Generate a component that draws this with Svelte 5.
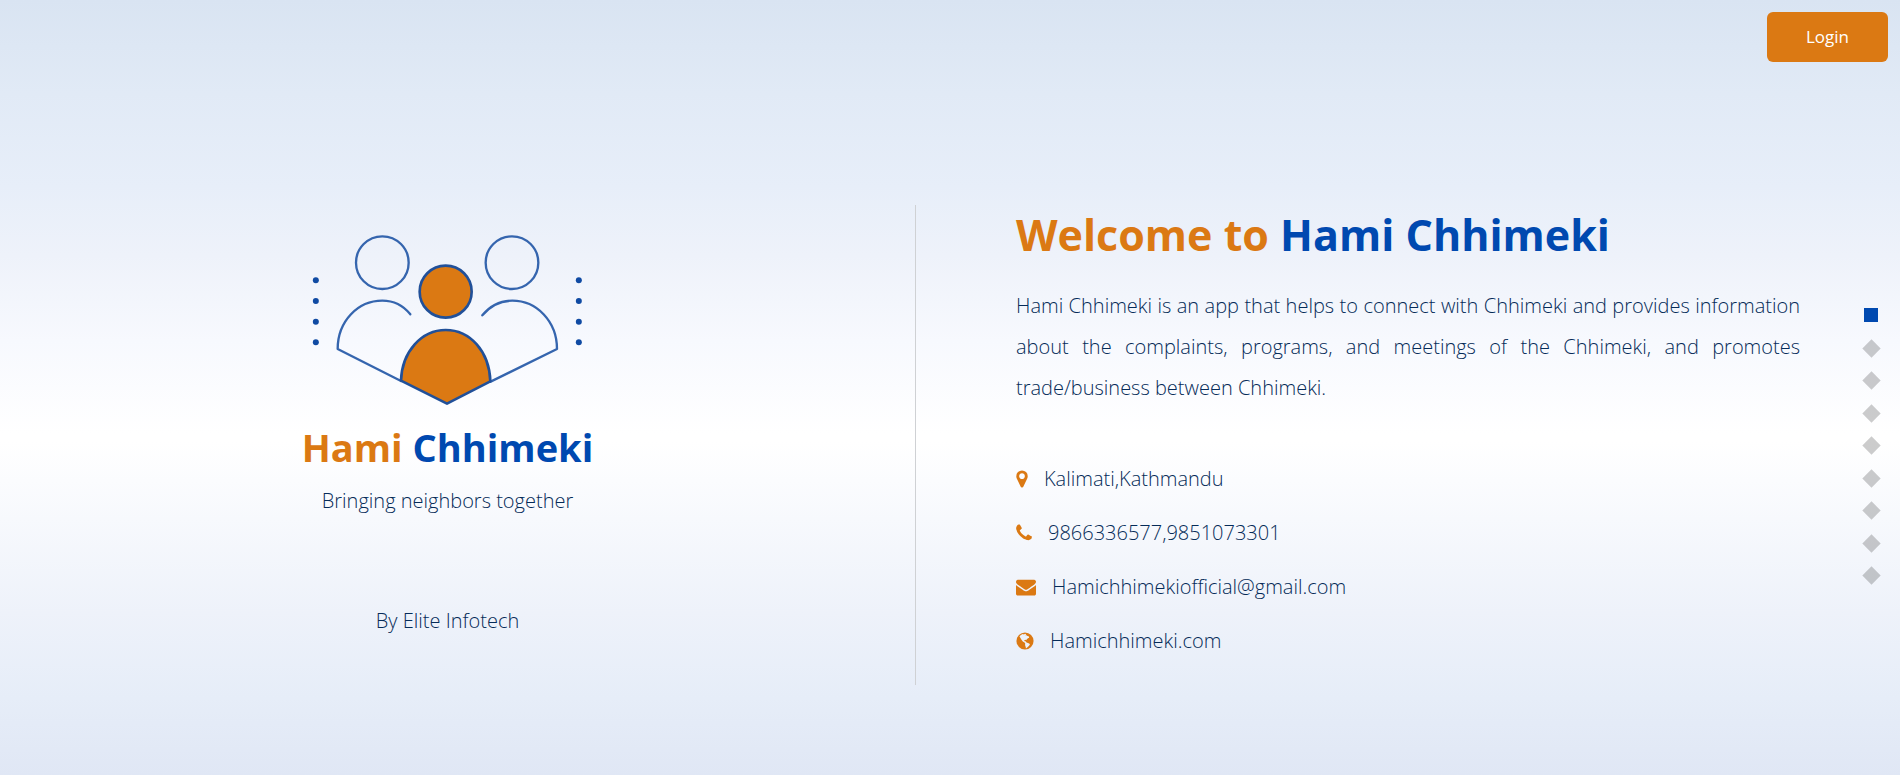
<script>
  const sections = ['Home', 'About', 'Features', 'Complaints', 'Programs', 'Meetings', 'Business', 'Download', 'Contact'];
  const dotRows = [182, 244, 306, 368];
</script>

<main>
  <section class="brand">
    <svg class="logo" viewBox="60 40 825 520" role="img" aria-label="Hami Chhimeki">
      <g fill="#0f4aa3">
        {#each dotRows as y}
          <circle cx="77.500" cy={y} r="9" />
          <circle cx="866.500" cy={y} r="9" />
        {/each}
      </g>
      <g fill="none" stroke="#3565ae" stroke-width="7" stroke-linecap="round" stroke-linejoin="round">
        <circle cx="277" cy="129" r="79" />
        <circle cx="666" cy="129" r="79" />
        <path d="M361 284 C340 258 309 243 277 243 C203 243 143 305 143 388 L333 484" />
        <path d="M577 287 C600 259 632 243 667 243 C740 243 801 305 801 388 L602 486" />
      </g>
      <g fill="#db7913" stroke="#215099" stroke-width="8" stroke-linejoin="round">
        <circle cx="467" cy="216" r="78" />
        <path d="M333 483 C336 395 395 331 467 331 C540 331 598 395 601 485 L471 552 Z" />
      </g>
    </svg>
    <h2><span class="orange">Hami</span> Chhimeki</h2>
    <p>Bringing neighbors together</p>
    <p class="credit">By Elite Infotech</p>
  </section>

  <section class="welcome">
    <h1><span class="orange">Welcome to</span> Hami Chhimeki</h1>
    <p class="intro">
      Hami Chhimeki is an app that helps to connect with Chhimeki and provides information about the complaints,
      programs, and meetings of the Chhimeki, and promotes trade/business between Chhimeki.
    </p>
    <ul>
      <li>
        <svg class="pin" viewBox="384 0 1024 1792" aria-hidden="true"><path d="M1152 640q0-106-75-181t-181-75-181 75-75 181 75 181 181 75 181-75 75-181zm256 0q0 109-33 179l-364 774q-16 33-47.500 52t-67.500 19-67.500-19-46.500-52l-365-774q-33-70-33-179 0-212 150-362t362-150 362 150 150 362z" /></svg>
        <span>Kalimati,Kathmandu</span>
      </li>
      <li>
        <svg class="phone" viewBox="192 0 1408 1792" aria-hidden="true"><path d="M1600 1240q0 27-10 70.500t-21 68.500q-21 50-122 106-94 51-186 51-27 0-52.500-3.500t-57.500-12.500-47.500-14.500-55.500-20.500-49-18q-98-35-175-83-128-79-264.500-215.500t-215.500-264.500q-48-77-83-175-3-9-18-49t-20.500-55.500-14.500-47.500-12.500-57.500-3.500-52.500q0-92 51-186 56-101 106-122 25-11 68.500-21t70.500-10q14 0 21 3 18 6 53 76 11 19 30 54t35 63.500 31 53.500q3 4 17.500 25t21.500 35.500 7 28.500q0 20-28.500 50t-62 55-62 53-28.500 46q0 9 5 22.500t8.500 20.500 14 24 11.500 19q76 137 174 235t235 174q2 1 19 11.500t24 14 20.500 8.500 22.500 5q18 0 46-28.500t53-62 55-62 50-28.500q14 0 28.500 7t35.500 21.500 25 17.500q25 15 53.500 31t63.500 35 54 30q70 35 76 53 3 7 3 21z" /></svg>
        <span>9866336577,9851073301</span>
      </li>
      <li>
        <svg class="mail" viewBox="0 0 1792 1792" aria-hidden="true"><path d="M1792 710v794q0 66-47 113t-113 47h-1472q-66 0-113-47t-47-113v-794q44 49 101 87 362 246 497 345 57 42 92.500 65.500t94.500 48 110 24.500h2q51 0 110-24.500t94.500-48 92.500-65.500q170-123 498-345 57-39 100-87zm0-294q0 79-49 151t-122 123q-376 261-468 325-10 7-42.500 31t-54 38.500-52 32.500-57.500 27-50 9h-2q-23 0-50-9t-57.500-27-52-32.500-54-38.500-42.500-31q-91-64-262-182.500t-205-142.500q-62-42-117-115.500t-55-136.500q0-78 41.500-130t118.500-52h1472q65 0 112.500 47t47.500 113z" /></svg>
        <span>Hamichhimekiofficial@gmail.com</span>
      </li>
      <li>
        <svg class="globe" viewBox="128 0 1536 1792" aria-hidden="true">
          <circle cx="896" cy="896" r="768" />
          <path class="land" d="M400 480 L560 330 L700 260 L800 310 L900 250 L1010 300 L930 390 L1030 370 L1120 440 L1230 470 L1270 600 L1160 650 L1060 740 L1000 830 L940 780 L830 830 L850 910 L950 900 L960 990 L1100 1050 L1270 1130 L1340 1210 L1240 1350 L1090 1480 L980 1560 L960 1440 L900 1260 L920 1120 L850 1020 L700 940 L580 780 L500 640 Z" />
        </svg>
        <span>Hamichhimeki.com</span>
      </li>
    </ul>
  </section>
</main>

<button class="login" type="button">Login</button>

<nav aria-label="Sections">
  {#each sections as name, i}
    <a href="#{name.toLowerCase()}" class:active={i === 0} aria-label={name}></a>
  {/each}
</nav>

<style>
  :global(body) {
    margin: 0;
  }

  main {
    box-sizing: border-box;
    min-height: 100vh;
    padding-top: 115px;
    display: grid;
    grid-template-columns: 915fr 985fr;
    align-content: center;
    font: 300 20px/26px 'Open Sans', 'Segoe UI', sans-serif;
    color: #052b58;
    background: linear-gradient(#d9e4f2 0%, #e1eaf6 12%, #e7eef9 24%, #eef2fa 33%, #f7f9fe 44%, #fff 56%, #fff 57%, #f7f9fd 67%, #eef2fa 79%, #e6edf8 90%, #e0e7f5 100%);
  }

  .brand {
    display: flex;
    flex-direction: column;
    align-items: center;
    padding: 28px 20px 0 0;
    text-align: center;
  }

  .logo {
    width: 275px;
    max-width: 80%;
  }

  h1,
  h2,
  p {
    margin: 0;
  }

  h1,
  h2 {
    font-weight: 700;
    color: #0049b0;
  }

  h2 {
    margin: 14px 0;
    font-size: 38px;
    line-height: 54px;
  }

  .orange {
    color: #db7913;
  }

  .credit {
    margin-top: 94px;
  }

  .welcome {
    box-sizing: border-box;
    min-height: 480px;
    padding: 0 100px;
    border-left: 1px solid #cfd1d4;
  }

  h1 {
    font-size: 43px;
    line-height: 60px;
  }

  .intro {
    margin: 20px 0 44px;
    line-height: 41px;
    text-align: justify;
  }

  ul {
    margin: 0;
    padding: 0;
    list-style: none;
  }

  li {
    display: flex;
    align-items: center;
    gap: 16px;
    line-height: 54px;
  }

  li svg {
    flex: none;
    height: 20px;
    fill: #db7913;
  }

  .pin {
    width: 12px;
  }

  .phone {
    width: 16px;
  }

  .mail {
    width: 20px;
  }

  .globe {
    width: 18px;
  }

  .land {
    fill: #edf2fa;
  }

  .login {
    position: fixed;
    top: 12px;
    right: 12px;
    width: 121px;
    height: 50px;
    padding: 0;
    border: 0;
    border-radius: 6px;
    font: 400 17px/24px 'Open Sans', 'Segoe UI', sans-serif;
    color: #fff;
    background: #db7913;
    cursor: pointer;
  }

  nav {
    position: fixed;
    top: 308px;
    right: 22px;
    height: 274px;
    display: flex;
    flex-direction: column;
    align-items: center;
    justify-content: space-between;
  }

  nav a {
    width: 13px;
    height: 13px;
    background: rgba(0, 0, 0, 0.2);
    transform: rotate(45deg);
  }

  nav .active {
    width: 14px;
    height: 14px;
    background: #0049b0;
    transform: none;
  }
</style>
